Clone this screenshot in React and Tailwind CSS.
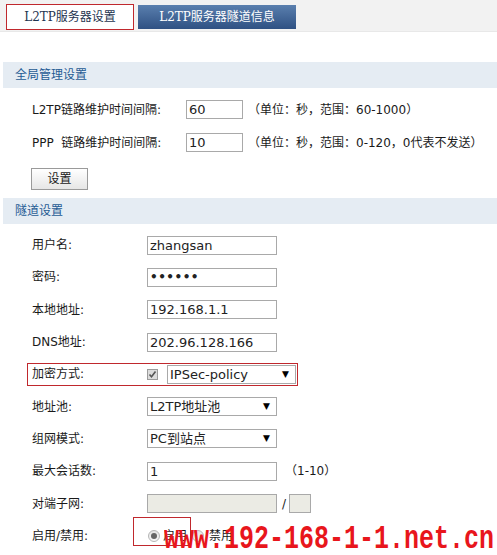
import React from "react";

const cjk = { fontFamily: '"DejaVu Sans", "Noto Sans CJK SC", sans-serif' };
const serif = { fontFamily: '"DejaVu Serif", "Noto Sans CJK SC", serif' };

function Input({ value, w = "w-[130px]", gray = false, dots = false }) {
  return (
    <div
      className={`${w} h-[19px] border border-[#a9a9a9] ${gray ? "bg-[#ebebe4]" : "bg-white"} flex items-center pl-[2px] text-[13px] text-[#222] leading-none`}
      style={cjk}
    >
      {dots ? <span className="text-[12px] tracking-[0.5px] font-bold">••••••</span> : value}
    </div>
  );
}

function Select({ value, w = "w-[130px]" }) {
  return (
    <div
      className={`${w} h-[19px] border border-[#a9a9a9] bg-white flex items-center pl-[2px] pr-[6px] text-[13px] text-[#222] leading-none`}
      style={cjk}
    >
      <span className="flex-1">{value}</span>
      <span className="text-[9px] text-black">▼</span>
    </div>
  );
}

function Row({ label, children, labelW = "w-[115px]", h = "h-[32.3px]" }) {
  return (
    <div className={`${h} flex items-center pl-[32px]`}>
      <div className={`${labelW} text-[12px] text-[#1a1a1a] whitespace-pre`} style={cjk}>
        {label}
      </div>
      {children}
    </div>
  );
}

function Header({ text }) {
  return (
    <div className="ml-[3px] h-[26px] bg-[#e5ecf3] flex items-center pl-[12px] text-[12px] text-[#1f5b93]" style={cjk}>
      {text}
    </div>
  );
}

function Radio({ checked }) {
  return (
    <div className="w-[12px] h-[12px] rounded-full border border-[#b5b5b5] bg-gradient-to-b from-[#e4e4e4] to-[#f8f8f8] flex items-center justify-center">
      {checked && <div className="w-[6px] h-[6px] rounded-full bg-[#666]" />}
    </div>
  );
}

export default function App() {
  return (
    <div className="relative w-[497px] h-[555px] bg-white overflow-hidden">
      {/* Tabs bar */}
      <div className="h-[32px] bg-[#f2f2f2] border-b border-[#e8e8e8] flex items-end pl-[6px] gap-[4px] pb-[1px]">
        <div className="w-[128px] h-[26px] bg-white border border-[#c0282d] flex items-center justify-center text-[12px] text-[#1e3450]" style={serif}>
          L2TP服务器设置
        </div>
        <div className="w-[158px] h-[24px] mb-[1px] bg-gradient-to-b from-[#5a7fae] to-[#2f5183] flex items-center justify-center text-[12px] text-white" style={serif}>
          L2TP服务器隧道信息
        </div>
      </div>

      <div className="h-[30px]" />
      <Header text="全局管理设置" />

      <div className="pt-[5px]">
        <Row label="L2TP链路维护时间间隔:" labelW="w-[154px]" h="h-[33px]">
          <Input value="60" w="w-[57px]" />
          <span className="ml-[5px] text-[12px] text-[#1a1a1a]" style={cjk}>（单位：秒，范围：60-1000）</span>
        </Row>
        <Row label="PPP  链路维护时间间隔:" labelW="w-[154px]" h="h-[33px]">
          <Input value="10" w="w-[57px]" />
          <span className="ml-[5px] text-[12px] text-[#1a1a1a] whitespace-nowrap" style={cjk}>（单位：秒，范围：0-120，0代表不发送）</span>
        </Row>
      </div>

      <div className="pl-[31px] pt-[9px]">
        <div className="w-[57px] h-[22px] border border-[#9a9a9a] bg-gradient-to-b from-white to-[#e6e6e6] flex items-center justify-center text-[12px] text-[#1a1a1a]" style={cjk}>
          设置
        </div>
      </div>

      <div className="h-[8px]" />
      <Header text="隧道设置" />

      <div className="pt-[5px]">
        <Row label="用户名:">
          <Input value="zhangsan" />
        </Row>
        <Row label="密码:">
          <Input dots />
        </Row>
        <Row label="本地地址:">
          <Input value="192.168.1.1" />
        </Row>
        <Row label="DNS地址:">
          <Input value="202.96.128.166" />
        </Row>
        <div className="h-[32.3px] flex items-center pl-[27px]">
          <div className="w-[271px] h-[23px] border border-[#c0282d] flex items-center pl-[4px]">
            <div className="w-[115px] text-[12px] text-[#1a1a1a]" style={cjk}>加密方式:</div>
            <div className="w-[11px] h-[11px] border border-[#9b9b9b] bg-[#dcdcdc] flex items-center justify-center">
              <svg width="9" height="9" viewBox="0 0 9 9">
                <path d="M1.5 4.5 L3.5 6.8 L7.5 1.5" stroke="#555" strokeWidth="1.6" fill="none" />
              </svg>
            </div>
            <div className="ml-[9px]">
              <Select value="IPSec-policy" w="w-[129px]" />
            </div>
          </div>
        </div>
        <Row label="地址池:">
          <Select value="L2TP地址池" />
        </Row>
        <Row label="组网模式:">
          <Select value="PC到站点" />
        </Row>
        <Row label="最大会话数:">
          <Input value="1" />
          <span className="ml-[8px] text-[12px] text-[#1a1a1a]" style={cjk}>（1-10）</span>
        </Row>
        <Row label="对端子网:">
          <Input value="" gray />
          <span className="ml-[5px] mr-[3px] text-[12px] text-[#1a1a1a]" style={cjk}>/</span>
          <Input value="" gray w="w-[22px]" />
        </Row>
        <Row label="启用/禁用:">
          <div className="relative flex items-center pl-[1px]">
            <Radio checked />
            <span className="ml-[3px] text-[12px] text-[#1a1a1a]" style={cjk}>启用</span>
            <div className="ml-[5px]"><Radio /></div>
            <span className="ml-[5px] text-[12px] text-[#1a1a1a]" style={cjk}>禁用</span>
            <div className="absolute left-[-14px] top-[-10px] w-[58px] h-[29px] border border-[#c0282d]" />
          </div>
        </Row>
      </div>

      {/* watermark */}
      <div
        className="absolute left-[164px] top-[523px] text-[25px] font-bold leading-none text-[#e8161c] whitespace-nowrap origin-top scale-y-[1.3]"
        style={{ fontFamily: '"Liberation Mono", "DejaVu Sans Mono", monospace' }}
      >
        www.192-168-1-1.net.cn
      </div>
    </div>
  );
}
